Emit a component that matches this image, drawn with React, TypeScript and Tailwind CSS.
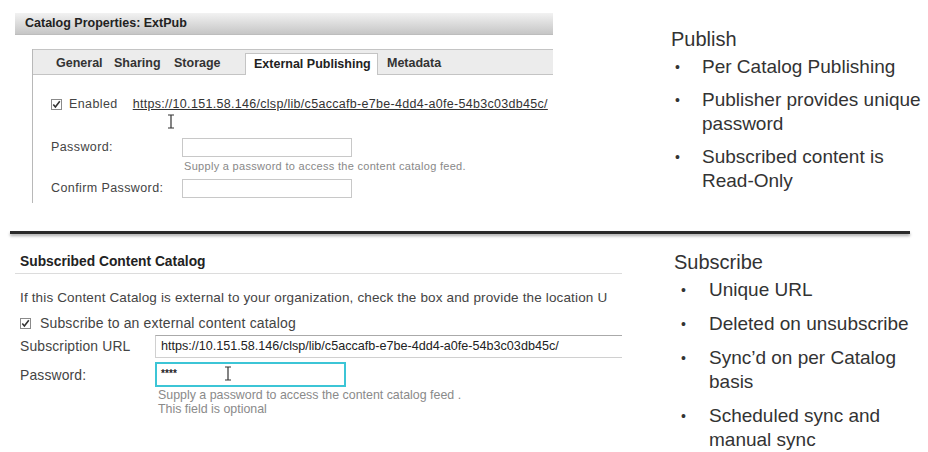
import React from "react";

function Check({ className = "" }: { className?: string }) {
  return (
    <svg width="11" height="11" viewBox="0 0 11 11" className={className}>
      <rect x="0.5" y="0.5" width="10" height="10" fill="#fff" stroke="#8a8a8a" />
      <path d="M2.3 5.4 L4.4 7.9 L8.8 2.2" fill="none" stroke="#333" strokeWidth="1.6" />
    </svg>
  );
}

function IBeam({ className = "" }: { className?: string }) {
  return (
    <svg width="8" height="15" viewBox="0 0 8 15" className={className}>
      <path d="M1 1 H7 M4 1 V14 M1 14 H7" stroke="#333" strokeWidth="1.2" fill="none" />
    </svg>
  );
}

function Bullets({ items, gap, bw, bp }: { items: string[][]; gap: string; bw: string; bp: string }) {
  return (
    <ul className={`flex flex-col ${gap}`}>
      {items.map((lines, i) => (
        <li key={i} className="flex">
          <span className={`${bw} ${bp} shrink-0 text-[14px] leading-[24px]`}>•</span>
          <span className="flex flex-col">
            {lines.map((l, j) => (
              <span key={j} className="leading-[24px] whitespace-nowrap">{l}</span>
            ))}
          </span>
        </li>
      ))}
    </ul>
  );
}

export default function App() {
  return (
    <div className="w-[928px] h-[452px] bg-white overflow-hidden font-['Liberation_Sans',Arial,sans-serif] text-[#333]">
      {/* TOP */}
      <div className="flex h-[231px]">
        <div className="w-[650px] shrink-0 pt-[13px]">
          <div className="ml-[15px] w-[538px] h-[22px] bg-gradient-to-b from-[#f2f2f2] to-[#c6c6c6] border-b border-[#bdbdbd] flex items-center pl-[10px] text-[12.5px] font-bold text-[#222]">
            Catalog Properties: ExtPub
          </div>
          <div className="ml-[32px] mt-[14px] w-[521px] border-l border-[#b8b8b8] h-[154px]">
            <div className="h-[26px] bg-[#ececec] border-t border-b border-[#c4c4c4] flex items-end pl-[23px] text-[12.5px] font-bold text-[#333]">
              <div className="w-[58px] h-full flex items-center pt-[2px]">General</div>
              <div className="w-[60px] h-full flex items-center pt-[2px]">Sharing</div>
              <div className="w-[71px] h-full flex items-center pt-[2px]">Storage</div>
              <div className="w-[133px] h-[22px] -mb-px bg-white border border-b-0 border-[#c4c4c4] flex items-center pl-[8px] text-[#222]">
                External Publishing
              </div>
              <div className="ml-[9px] h-full flex items-center pt-[2px]">Metadata</div>
            </div>
            <div className="pl-[18px] pt-[23px] text-[12.5px] text-[#444] tracking-[0.4px]">
              <div className="flex items-center h-[12px]">
                <Check />
                <span className="ml-[7px]">Enabled</span>
                <span className="ml-[15px] underline text-[#333] tracking-[0.3px] whitespace-nowrap">
                  https://10.151.58.146/clsp/lib/c5accafb-e7be-4dd4-a0fe-54b3c03db45c/
                </span>
              </div>
              <div className="ml-[116px] mt-[4px] h-[15px]">
                <IBeam />
              </div>
              <div className="flex mt-[9px]">
                <span className="w-[131px]">Password:</span>
                <div className="flex flex-col">
                  <div className="w-[170px] h-[19px] border border-[#c8c8c8] bg-white" />
                  <span className="mt-[1px] ml-[2px] text-[11px] text-[#888] tracking-[0.3px] whitespace-nowrap">
                    Supply a password to access the content catalog feed.
                  </span>
                </div>
              </div>
              <div className="flex mt-[4px] items-center">
                <span className="w-[131px]">Confirm Password:</span>
                <div className="w-[170px] h-[19px] border border-[#c8c8c8] bg-white" />
              </div>
            </div>
          </div>
        </div>
        <div className="pl-[21px] pt-[27px] text-[19px]">
          <div className="text-[20px] leading-[24px]">Publish</div>
          <div className="mt-[4px]">
            <Bullets
              gap="gap-[9px]"
              bw="w-[31px]"
              bp="pl-[4px]"
              items={[
                ["Per Catalog Publishing"],
                ["Publisher provides unique", "password"],
                ["Subscribed content is", "Read-Only"],
              ]}
            />
          </div>
        </div>
      </div>

      {/* DIVIDER */}
      <div className="ml-[10px] w-[900px] h-[3px] bg-[#2a2a2a] shadow-[0_2px_3px_rgba(0,0,0,0.35)]" />

      {/* BOTTOM */}
      <div className="flex">
        <div className="w-[622px] shrink-0 overflow-hidden pt-[20px]">
          <div className="ml-[15px] w-[607px] border-b border-[#dcdcdc] pl-[5px] pb-[3px] text-[13.8px] font-bold text-[#222] leading-[16px]">
            Subscribed Content Catalog
          </div>
          <div className="pl-[20px] text-[13.5px] text-[#444] tracking-[0.15px]">
            <div className="mt-[17px] whitespace-nowrap leading-[14px]">
              If this Content Catalog is external to your organization, check the box and provide the location U
            </div>
            <div className="flex items-center mt-[11px] h-[14px]">
              <Check />
              <span className="ml-[9px] text-[14px] whitespace-nowrap">Subscribe to an external content catalog</span>
            </div>
            <div className="flex items-center mt-[5px]">
              <span className="w-[135px] shrink-0 text-[13.9px] whitespace-nowrap">Subscription URL</span>
              <div className="w-[467px] shrink-0 h-[23px] border border-r-0 border-[#d0d0d0] border-t-[#aaaaaa] bg-white flex items-center pl-[5px] text-[12.6px] text-[#222] whitespace-nowrap tracking-[0px]">
                https://10.151.58.146/clsp/lib/c5accafb-e7be-4dd4-a0fe-54b3c03db45c/
              </div>
            </div>
            <div className="flex mt-[4px]">
              <span className="w-[135px] pt-[3px] text-[13.9px]">Password:</span>
              <div className="flex flex-col">
                <div className="w-[191px] h-[25px] border-2 border-[#3cc5d6] bg-white flex items-center pl-[4px] text-[10px] font-bold text-[#222]">
                  <span className="-mt-[3px]">****</span>
                  <IBeam className="ml-[47px] -mt-[2px]" />
                </div>
                <div className="mt-[1px] ml-[3px] text-[12.4px] text-[#8a8a8a] leading-[14px] tracking-[0px] whitespace-nowrap">
                  <div>Supply a password to access the content catalog feed .</div>
                  <div>This field is optional</div>
                </div>
              </div>
            </div>
          </div>
        </div>
        <div className="pl-[52px] pt-[16px] text-[19px]">
          <div className="text-[20px] leading-[24px]">Subscribe</div>
          <div className="mt-[4px]">
            <Bullets
              gap="gap-[10px]"
              bw="w-[35px]"
              bp="pl-[7px]"
              items={[
                ["Unique URL"],
                ["Deleted on unsubscribe"],
                ["Sync’d on per Catalog", "basis"],
                ["Scheduled sync and", "manual sync"],
              ]}
            />
          </div>
        </div>
      </div>
    </div>
  );
}
